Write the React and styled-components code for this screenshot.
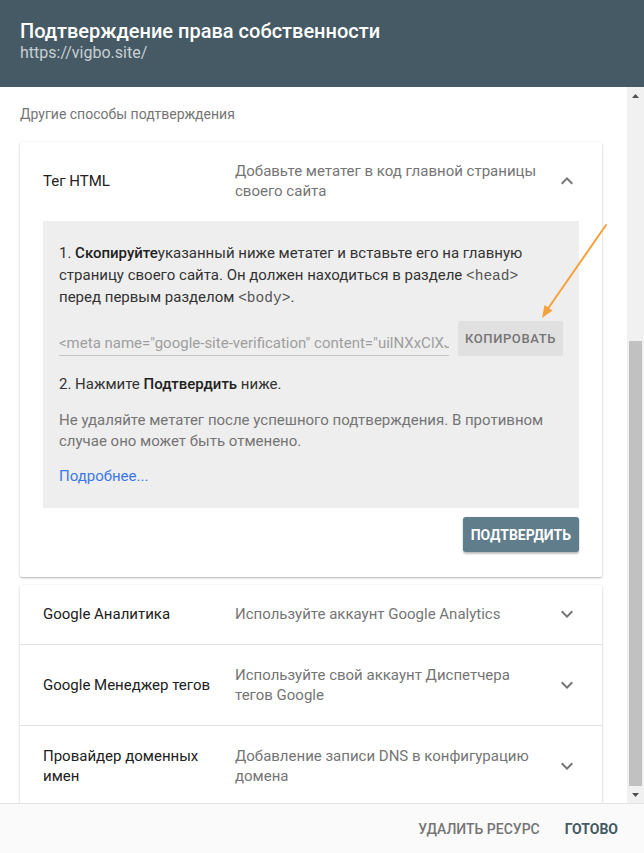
import React from 'react'
import styled, {createGlobalStyle} from 'styled-components';

const GlobalStyle = createGlobalStyle`
    html, body {
        margin: 0;
        padding: 0;
        background: #fff;
    }
    body {
        font-family: Roboto, "Noto Sans", Arial, sans-serif;
        -webkit-font-smoothing: antialiased;
    }
`;

const methods = [
    {title: 'Google Аналитика', desc: 'Используйте аккаунт Google Analytics'},
    {title: 'Google Менеджер тегов', desc: 'Используйте свой аккаунт Диспетчера тегов Google'},
    {title: 'Провайдер доменных имен', desc: 'Добавление записи DNS в конфигурацию домена'},
];

const Chevron = ({up}) => (
    <ChevronBox>
        <svg width="24" height="24" viewBox="0 0 24 24">
            {up
                ? <path d="M12 8l-6 6 1.41 1.41L12 10.83l4.59 4.58L18 14z" fill="#757575"/>
                : <path d="M16.59 8.59L12 13.17 7.41 8.59 6 10l6 6 6-6z" fill="#757575"/>}
        </svg>
    </ChevronBox>
);

const App = () => {
    return (
        <>
        <GlobalStyle/>
        <Dialog>
            <Header>
                <Title>Подтверждение права собственности</Title>
                <Url>https://vigbo.site/</Url>
            </Header>
            <Body>
                <Content>
                    <SectionLabel>Другие способы подтверждения</SectionLabel>
                    <Card>
                        <Row>
                            <RowTitle>Тег HTML</RowTitle>
                            <RowDesc>Добавьте метатег в код главной страницы своего сайта</RowDesc>
                            <Chevron up/>
                        </Row>
                        <Panel>
                            <Step>
                                1. <b>Скопируйте</b>указанный ниже метатег и вставьте его на главную
                                страницу своего сайта. Он должен находиться в разделе <Code>&lt;head&gt;</Code> перед
                                первым разделом <Code>&lt;body&gt;</Code>.
                            </Step>
                            <CopyRow>
                                <MetaInput readOnly value={'<meta name="google-site-verification" content="uilNXxClXJq8rTbV0" />'}/>
                                <CopyButton>Копировать</CopyButton>
                            </CopyRow>
                            <Step>2. Нажмите <b>Подтвердить</b> ниже.</Step>
                            <Note>
                                Не удаляйте метатег после успешного подтверждения. В противном
                                случае оно может быть отменено.
                            </Note>
                            <MoreLink href="#">Подробнее...</MoreLink>
                        </Panel>
                        <Actions>
                            <ConfirmButton>Подтвердить</ConfirmButton>
                        </Actions>
                    </Card>
                    <Card>
                        {methods.map((m) => (
                            <Row key={m.title}>
                                <RowTitle>{m.title}</RowTitle>
                                <RowDesc>{m.desc}</RowDesc>
                                <Chevron/>
                            </Row>
                        ))}
                    </Card>
                </Content>
                <Scrollbar>
                    <ScrollArrow>
                        <svg width="7" height="4" viewBox="0 0 7 4"><path d="M0 4L3.5 0 7 4z" fill="#505050"/></svg>
                    </ScrollArrow>
                    <Track>
                        <Thumb/>
                    </Track>
                    <ScrollArrow>
                        <svg width="7" height="4" viewBox="0 0 7 4"><path d="M0 0h7L3.5 4z" fill="#505050"/></svg>
                    </ScrollArrow>
                </Scrollbar>
            </Body>
            <Footer>
                <FooterButton>Удалить ресурс</FooterButton>
                <FooterButton primary>Готово</FooterButton>
            </Footer>
            <Annotation width="644" height="853" viewBox="0 0 644 853">
                <line x1="606" y1="225" x2="547" y2="310" stroke="#f5a23c" strokeWidth="2" strokeLinecap="round"/>
                <path d="M542 318l2.5-13 8 5.5z" fill="#f5a23c"/>
            </Annotation>
        </Dialog>
        </>
    )
}

const Dialog = styled.div`
    position: relative;
    width: 644px;
    height: 853px;
    display: flex;
    flex-direction: column;
    overflow: hidden;
    background: #fff;
`;

const Header = styled.div`
    height: 87px;
    box-sizing: border-box;
    padding: 19px 20px 0;
    background-color: #465a65;
    flex-shrink: 0;
`;

const Title = styled.div`
    font-size: 20px;
    line-height: 24px;
    font-weight: 500;
    color: #fff;
`;

const Url = styled.div`
    font-size: 16px;
    line-height: 20px;
    color: #c7cfd3;
`;

const Body = styled.div`
    flex: 1;
    display: flex;
    min-height: 0;
    overflow: hidden;
`;

const Content = styled.div`
    flex: 1;
    padding: 19px 25px 0 20px;
    display: flex;
    flex-direction: column;
`;

const SectionLabel = styled.div`
    font-size: 14px;
    line-height: 16px;
    color: #757575;
    margin-bottom: 20px;
`;

const Card = styled.div`
    background: #fff;
    border-radius: 2px;
    box-shadow: 0 1px 3px rgba(0,0,0,0.2), 0 1px 1px rgba(0,0,0,0.12);
    margin-bottom: 8px;
    flex-shrink: 0;
`;

const Row = styled.div`
    display: flex;
    align-items: center;
    padding: 19px 23px 20px 23px;
    font-size: 15px;
    line-height: 20px;
    & + & {
        border-top: 1px solid #e0e0e0;
        padding-top: 20px;
    }
`;

const RowTitle = styled.div`
    width: 192px;
    box-sizing: border-box;
    padding-right: 16px;
    flex-shrink: 0;
    color: #212121;
`;

const RowDesc = styled.div`
    flex: 1;
    color: #757575;
    padding-right: 17px;
`;

const ChevronBox = styled.div`
    width: 24px;
    height: 20px;
    flex-shrink: 0;
    display: flex;
    align-items: center;
    overflow: visible;
`;

const Panel = styled.div`
    margin: 0 23px;
    padding: 21px 16px 21px 16px;
    background-color: #eeeeee;
    font-size: 15px;
    line-height: 22px;
    color: #333;
`;

const Step = styled.div`
    color: #333;
    b {
        font-weight: 500;
        color: #212121;
    }
`;

const Code = styled.code`
    font-family: "Liberation Mono", "Courier New", monospace;
    font-size: 14.5px;
    line-height: 1;
    color: #555;
`;

const CopyRow = styled.div`
    display: flex;
    align-items: flex-end;
    gap: 9px;
    margin: 13px 0 17px;
`;

const MetaInput = styled.input`
    flex: 1;
    min-width: 0;
    border: 0;
    border-bottom: 1px solid #c4c4c4;
    background: transparent;
    padding: 0 0 1px;
    height: 22px;
    font-family: Roboto, Arial, sans-serif;
    font-size: 15px;
    color: #9e9e9e;
    &:focus{
        outline: none;
    };
`;

const CopyButton = styled.button`
    width: 105px;
    height: 35px;
    border: none;
    border-radius: 2px;
    background-color: #e0e0e0;
    color: #757575;
    font-family: Roboto, Arial, sans-serif;
    font-size: 13px;
    font-weight: 500;
    letter-spacing: 0.6px;
    text-transform: uppercase;
    cursor: pointer;
`;

const Note = styled.div`
    margin-top: 15px;
    line-height: 21px;
    color: #757575;
`;

const MoreLink = styled.a`
    display: inline-block;
    margin-top: 13px;
    color: #3b78e7;
    text-decoration: none;
`;

const Actions = styled.div`
    display: flex;
    justify-content: flex-end;
    padding: 9px 23px 25px;
`;

const ConfirmButton = styled.button`
    height: 35px;
    padding: 0 8px;
    min-width: 116px;
    border: none;
    border-radius: 3px;
    background-color: #607d8b;
    color: #fff;
    font-family: Roboto, Arial, sans-serif;
    font-size: 14px;
    font-weight: 700;
    text-transform: uppercase;
    box-shadow: 0 2px 2px rgba(0,0,0,0.24), 0 0 2px rgba(0,0,0,0.12);
    cursor: pointer;
`;

const Scrollbar = styled.div`
    width: 17px;
    flex-shrink: 0;
    display: flex;
    flex-direction: column;
    background: #f1f1f1;
`;

const ScrollArrow = styled.div`
    height: 17px;
    display: flex;
    align-items: center;
    justify-content: center;
    flex-shrink: 0;
`;

const Track = styled.div`
    flex: 1;
    display: flex;
    flex-direction: column;
    justify-content: flex-end;
    padding: 0 2px;
`;

const Thumb = styled.div`
    height: 445px;
    background: #c1c1c1;
`;

const Footer = styled.div`
    height: 50px;
    flex-shrink: 0;
    box-sizing: border-box;
    border-top: 1px solid #e3e3e3;
    background: #fafafa;
    display: flex;
    align-items: center;
    justify-content: flex-end;
    gap: 25px;
    padding: 0 26px 0 0;
`;

const FooterButton = styled.div`
    font-size: 14px;
    font-weight: 500;
    text-transform: uppercase;
    color: ${p => p.primary ? '#455a64' : '#757575'};
    ${p => p.primary && 'font-weight: 700;'}
    cursor: pointer;
`;

const Annotation = styled.svg`
    position: absolute;
    left: 0;
    top: 0;
    pointer-events: none;
`;

export default App
